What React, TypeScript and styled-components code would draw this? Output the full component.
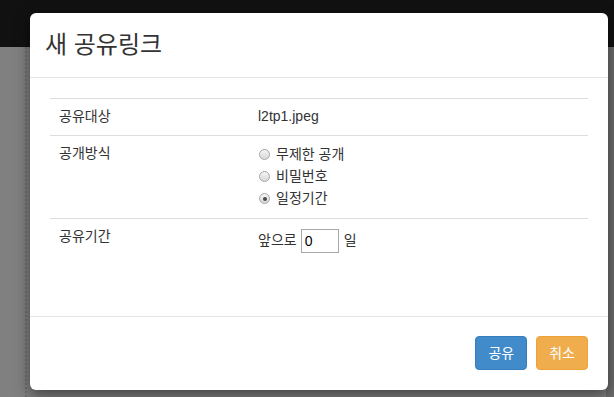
import React from "react";
import styled, { createGlobalStyle } from "styled-components";

const GlobalStyle = createGlobalStyle`
  html, body {
    margin: 0;
    padding: 0;
  }
  body {
    font-family: "Liberation Sans", "Noto Sans CJK KR", sans-serif;
    font-size: 14px;
    line-height: 1.42857;
    color: #333;
  }
`;

const Page = styled.div`
  position: relative;
  width: 614px;
  height: 397px;
  overflow: hidden;
  background: #808080;
`;

const NavBar = styled.div`
  height: 47px;
  background: #111;
`;

const Content = styled.div`
  display: flex;
  height: 350px;
  padding-left: 25px;
`;

const SidePanel = styled.div`
  flex: 1;
  border-left: 2px dotted #6f6f6f;
`;

const RightStrip = styled.div`
  width: 8px;
  background: #6d6d6d;
`;

const Modal = styled.div`
  position: absolute;
  left: 30px;
  top: 13px;
  width: 578px;
  background: #fff;
  border-radius: 6px;
  box-shadow: 0 5px 15px rgba(0, 0, 0, 0.5);
`;

const Header = styled.div`
  padding: 15px;
  border-bottom: 1px solid #e5e5e5;
`;

const Title = styled.h3`
  margin: 0;
  font-size: 24px;
  line-height: 34px;
  font-weight: 400;
  color: #333;
`;

const Body = styled.div`
  padding: 20px 20px 35px;
`;

const Table = styled.table`
  width: 100%;
  table-layout: fixed;
  border-collapse: collapse;
  margin-bottom: 20px;
`;

const Row = styled.tr`
  border-top: 1px solid #ddd;
`;

const Label = styled.td`
  width: 191px;
  padding: 8px 8px 8px 9px;
  vertical-align: top;
`;

const Value = styled.td`
  padding: 8px 8px 8px 0;
  vertical-align: top;
`;

const RadioList = styled.div`
  display: flex;
  flex-direction: column;
`;

const RadioLine = styled.label`
  display: flex;
  align-items: center;
  height: 22px;
  gap: 6px;
`;

const RadioDot = styled.span<{ $checked?: boolean }>`
  position: relative;
  width: 11px;
  height: 11px;
  border-radius: 50%;
  border: 1px solid #a8a8a8;
  background: linear-gradient(#f4f4f4, #d8d8d8);
  box-sizing: border-box;
  margin-left: 1px;
  &::after {
    content: "";
    display: ${(p) => (p.$checked ? "block" : "none")};
    position: absolute;
    left: 2.5px;
    top: 2.5px;
    width: 4px;
    height: 4px;
    border-radius: 50%;
    background: #4a4a4a;
  }
`;

const PeriodLine = styled.div`
  display: flex;
  align-items: center;
  gap: 4px;
  padding-top: 2px;
`;

const DayInput = styled.input`
  width: 38px;
  height: 24px;
  box-sizing: border-box;
  border: 1px solid #a9a9a9;
  padding: 1px 3px;
  font-family: "Liberation Sans", sans-serif;
  font-size: 14px;
  color: #000;
  margin-right: 1px;
`;

const Footer = styled.div`
  display: flex;
  justify-content: flex-end;
  gap: 9px;
  padding: 19px 20px 20px;
  border-top: 1px solid #e5e5e5;
`;

const Button = styled.button<{ $variant: "primary" | "warning" }>`
  height: 34px;
  padding: 6px 12px;
  border-radius: 4px;
  font-family: "Liberation Sans", "Noto Sans CJK KR", sans-serif;
  font-size: 14px;
  line-height: 20px;
  color: #fff;
  background: ${(p) => (p.$variant === "primary" ? "#428bca" : "#f0ad4e")};
  border: 1px solid ${(p) => (p.$variant === "primary" ? "#357ebd" : "#eea236")};
`;

const methods = [
  { label: "무제한 공개", checked: false },
  { label: "비밀번호", checked: false },
  { label: "일정기간", checked: true },
];

export default function App() {
  return (
    <Page>
      <GlobalStyle />
      <NavBar />
      <Content>
        <SidePanel />
        <RightStrip />
      </Content>
      <Modal>
        <Header>
          <Title>새 공유링크</Title>
        </Header>
        <Body>
          <Table>
            <tbody>
              <Row>
                <Label>공유대상</Label>
                <Value>l2tp1.jpeg</Value>
              </Row>
              <Row>
                <Label>공개방식</Label>
                <Value>
                  <RadioList>
                    {methods.map((m) => (
                      <RadioLine key={m.label}>
                        <RadioDot $checked={m.checked} />
                        {m.label}
                      </RadioLine>
                    ))}
                  </RadioList>
                </Value>
              </Row>
              <Row>
                <Label>공유기간</Label>
                <Value>
                  <PeriodLine>
                    앞으로 <DayInput defaultValue="0" /> 일
                  </PeriodLine>
                </Value>
              </Row>
            </tbody>
          </Table>
        </Body>
        <Footer>
          <Button $variant="primary">공유</Button>
          <Button $variant="warning">취소</Button>
        </Footer>
      </Modal>
    </Page>
  );
}
